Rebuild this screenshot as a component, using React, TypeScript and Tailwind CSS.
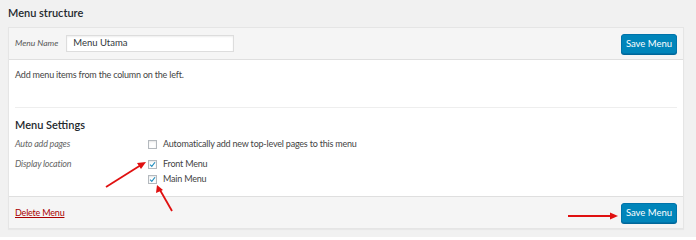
import React from "react";

const font = { fontFamily: 'Lato, "Open Sans", sans-serif' };

function SaveButton() {
  return (
    <button className="h-[20px] w-[56px] rounded-[3px] border border-[#0073aa] bg-[#0085ba] text-[9.5px] leading-none text-white shadow-[0_1px_0_#006799]">
      Save Menu
    </button>
  );
}

function Check({ checked }: { checked?: boolean }) {
  return (
    <span className="flex h-[9px] w-[9px] items-center justify-center border border-[#b4b9be] bg-white shadow-[inset_0_1px_2px_rgba(0,0,0,0.1)]">
      {checked && (
        <svg viewBox="0 0 10 10" className="h-[9px] w-[9px]">
          <path d="M1.5 5.2 L4 7.6 L8.6 1.8" fill="none" stroke="#1e8cbe" strokeWidth="1.6" />
        </svg>
      )}
    </span>
  );
}

export default function App() {
  return (
    <div className="relative h-[237px] w-[696px] overflow-hidden bg-[#f1f1f1] text-[#444]" style={font}>
      <h2 className="px-[8px] pt-[4px] pb-[6px] text-[11px] font-semibold leading-[17px] text-[#23282d]">
        Menu structure
      </h2>
      <div className="mx-[8px] w-[676px] border border-[#e5e5e5] shadow-[0_1px_1px_rgba(0,0,0,0.04)]">
        <div className="flex h-[32px] items-center justify-between border-b border-[#dfdfdf] bg-[#f5f5f5] px-[6px]">
          <div className="flex items-center gap-[8px]">
            <span className="text-[8.5px] italic text-[#555]">Menu Name</span>
            <div className="flex h-[17px] w-[168px] items-center border border-[#ddd] bg-white px-[6px] text-[9.5px] text-[#32373c] shadow-[inset_0_1px_2px_rgba(0,0,0,0.07)]">
              Menu Utama
            </div>
          </div>
          <SaveButton />
        </div>
        <div className="bg-white px-[6px] tracking-[-0.2px]">
          <p className="pt-[9px] pb-[26px] text-[9px] leading-[12px]">Add menu items from the column on the left.</p>
          <div className="border-t border-[#eee] pt-[10px] pb-[11px]">
            <h3 className="text-[11px] font-semibold leading-[14px] tracking-normal text-[#23282d]">Menu Settings</h3>
            <div className="mt-[6px] grid grid-cols-[133px_1fr] gap-y-[8px] text-[9px] leading-[12px]">
              <span className="italic text-[#666]">Auto add pages</span>
              <div className="flex items-center gap-[6px]">
                <Check />
                <span>Automatically add new top-level pages to this menu</span>
              </div>
              <span className="italic text-[#666]">Display location</span>
              <div className="flex flex-col gap-[3px]">
                <div className="flex items-center gap-[6px]">
                  <Check checked />
                  <span>Front Menu</span>
                </div>
                <div className="flex items-center gap-[6px]">
                  <Check checked />
                  <span>Main Menu</span>
                </div>
              </div>
            </div>
          </div>
        </div>
        <div className="flex h-[32px] items-center justify-between border-t border-[#dfdfdf] bg-[#f5f5f5] px-[6px]">
          <a className="text-[9px] tracking-[-0.2px] text-[#a00] underline">Delete Menu</a>
          <SaveButton />
        </div>
      </div>
      <svg className="pointer-events-none absolute inset-0" width="696" height="237">
        <g stroke="#e01010" strokeWidth="1.8" fill="#e01010">
          <line x1="106" y1="187" x2="141" y2="165" />
          <polygon points="146,162 137,163 141,169" stroke="none" />
          <line x1="172" y1="211" x2="160" y2="190" />
          <polygon points="157,185 156,193 163,190" stroke="none" />
          <line x1="568" y1="216" x2="611" y2="216" />
          <polygon points="618,216 610,212.5 610,219.5" stroke="none" />
        </g>
      </svg>
    </div>
  );
}
